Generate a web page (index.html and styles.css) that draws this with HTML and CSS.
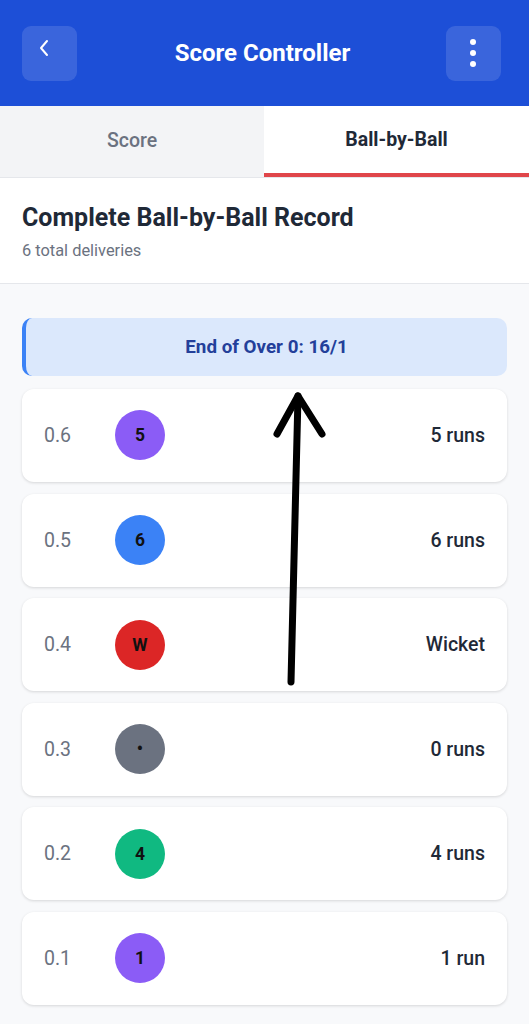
FILE: index.html
```html
<!DOCTYPE html>
<html lang="en">
<head>
  <meta charset="UTF-8">
  <title>Score Controller</title>
  <meta name="viewport" content="width=device-width, initial-scale=1.0">
  <link rel="stylesheet" href="styles.css">
</head>
<body>
  <header class="topbar">
    <button class="icon-btn" aria-label="Back">
      <svg width="14" height="18" viewBox="0 0 14 18"><path d="M10 2 L4 9 L10 16" fill="none" stroke="#fff" stroke-width="2" stroke-linecap="round" stroke-linejoin="round"/></svg>
    </button>
    <h1>Score Controller</h1>
    <button class="icon-btn" aria-label="Menu">
      <svg width="8" height="30" viewBox="0 0 8 30"><circle cx="4" cy="4" r="3" fill="#fff"/><circle cx="4" cy="15" r="3" fill="#fff"/><circle cx="4" cy="26" r="3" fill="#fff"/></svg>
    </button>
  </header>

  <nav class="tabs">
    <div class="tab">Score</div>
    <div class="tab active">Ball-by-Ball</div>
  </nav>

  <section class="record-head">
    <h2>Complete Ball-by-Ball Record</h2>
    <p>6 total deliveries</p>
  </section>

  <main class="record-list">
    <div class="over-summary">End of Over 0: 16/1</div>

    <div class="ball-card">
      <span class="over-no">0.6</span>
      <span class="ball purple">5</span>
      <span class="result">5 runs</span>
    </div>
    <div class="ball-card">
      <span class="over-no">0.5</span>
      <span class="ball blue">6</span>
      <span class="result">6 runs</span>
    </div>
    <div class="ball-card">
      <span class="over-no">0.4</span>
      <span class="ball red">W</span>
      <span class="result">Wicket</span>
    </div>
    <div class="ball-card">
      <span class="over-no">0.3</span>
      <span class="ball gray">•</span>
      <span class="result">0 runs</span>
    </div>
    <div class="ball-card">
      <span class="over-no">0.2</span>
      <span class="ball green">4</span>
      <span class="result">4 runs</span>
    </div>
    <div class="ball-card">
      <span class="over-no">0.1</span>
      <span class="ball purple">1</span>
      <span class="result">1 run</span>
    </div>
  </main>

  <!-- hand-drawn annotation on top of the screenshot -->
  <svg class="annotation" width="529" height="1024" viewBox="0 0 529 1024">
    <path d="M291 682 L298 396" fill="none" stroke="#000" stroke-width="7" stroke-linecap="round"/>
    <path d="M277 434 L298 396 L322 434" fill="none" stroke="#000" stroke-width="7" stroke-linecap="round" stroke-linejoin="round"/>
  </svg>
</body>
</html>
```

FILE: styles.css
```css
body {
  margin: 0;
  background-color: #f8f9fb;
  color: #1f2937;
  font-family: Roboto, 'Noto Sans', sans-serif;
  position: relative;
  min-height: 1024px;
}

.topbar {
  height: 106px;
  background-color: #1d4fd7;
  display: flex;
  align-items: center;
  justify-content: space-between;
  padding: 0 28px 0 22px;
  box-sizing: border-box;
}

.topbar h1 {
  margin: 0 0 0 2px;
  color: #fff;
  font-size: 24px;
  font-weight: 700;
}

.icon-btn {
  width: 55px;
  height: 55px;
  border: none;
  border-radius: 9px;
  background-color: rgba(255, 255, 255, 0.13);
  display: flex;
  align-items: center;
  justify-content: center;
  padding: 0;
}

.icon-btn:first-child svg {
  margin-right: 12px;
  margin-bottom: 10px;
}

.tabs {
  display: flex;
  height: 71px;
  border-bottom: 1px solid #e5e7eb;
  background: #fff;
}

.tab {
  flex: 0 0 264px;
  display: flex;
  align-items: center;
  justify-content: center;
  font-size: 19.5px;
  font-weight: 500;
  color: #6b7280;
  background-color: #f3f4f6;
  box-sizing: border-box;
  padding-bottom: 3px;
}

.tab.active {
  flex: 1;
  background-color: #fff;
  color: #1f2937;
  font-weight: 700;
  border-bottom: 4px solid #e0464a;
  padding-bottom: 0;
}

.record-head {
  background: #fff;
  padding: 25px 22px 23px;
  border-bottom: 1px solid #e5e7eb;
}

.record-head h2 {
  margin: 0;
  font-size: 25px;
  font-weight: 700;
  color: #1f2937;
  line-height: 30px;
}

.record-head p {
  margin: 9px 0 0;
  font-size: 16.4px;
  color: #6b7280;
  line-height: 18px;
}

.record-list {
  padding: 34px 22px 20px;
  display: flex;
  flex-direction: column;
  gap: 11.6px;
}

.over-summary {
  height: 58px;
  background-color: #dbe8fc;
  border-left: 4px solid #3b82f6;
  border-radius: 10px;
  display: flex;
  align-items: center;
  justify-content: center;
  font-size: 18.8px;
  font-weight: 700;
  color: #233f9a;
  margin-bottom: 1.4px;
}

.ball-card {
  height: 93px;
  background: #fff;
  border-radius: 12px;
  box-shadow: 0 1px 3px rgba(0, 0, 0, 0.14);
  display: flex;
  align-items: center;
  padding: 0 22px;
}

.over-no {
  width: 71px;
  font-size: 19.5px;
  color: #6b7280;
}

.ball {
  width: 50px;
  height: 50px;
  border-radius: 50%;
  display: flex;
  align-items: center;
  justify-content: center;
  font-size: 17.5px;
  font-weight: 700;
  color: #111;
}

.ball.purple { background-color: #8b5cf6; }
.ball.blue { background-color: #3b82f6; }
.ball.red { background-color: #dc2626; }
.ball.gray { background-color: #6b7280; }
.ball.green { background-color: #10b981; }

.result {
  margin-left: auto;
  font-size: 19.5px;
  font-weight: 500;
  color: #1f2937;
}

.annotation {
  position: absolute;
  top: 0;
  left: 0;
  pointer-events: none;
}
```
